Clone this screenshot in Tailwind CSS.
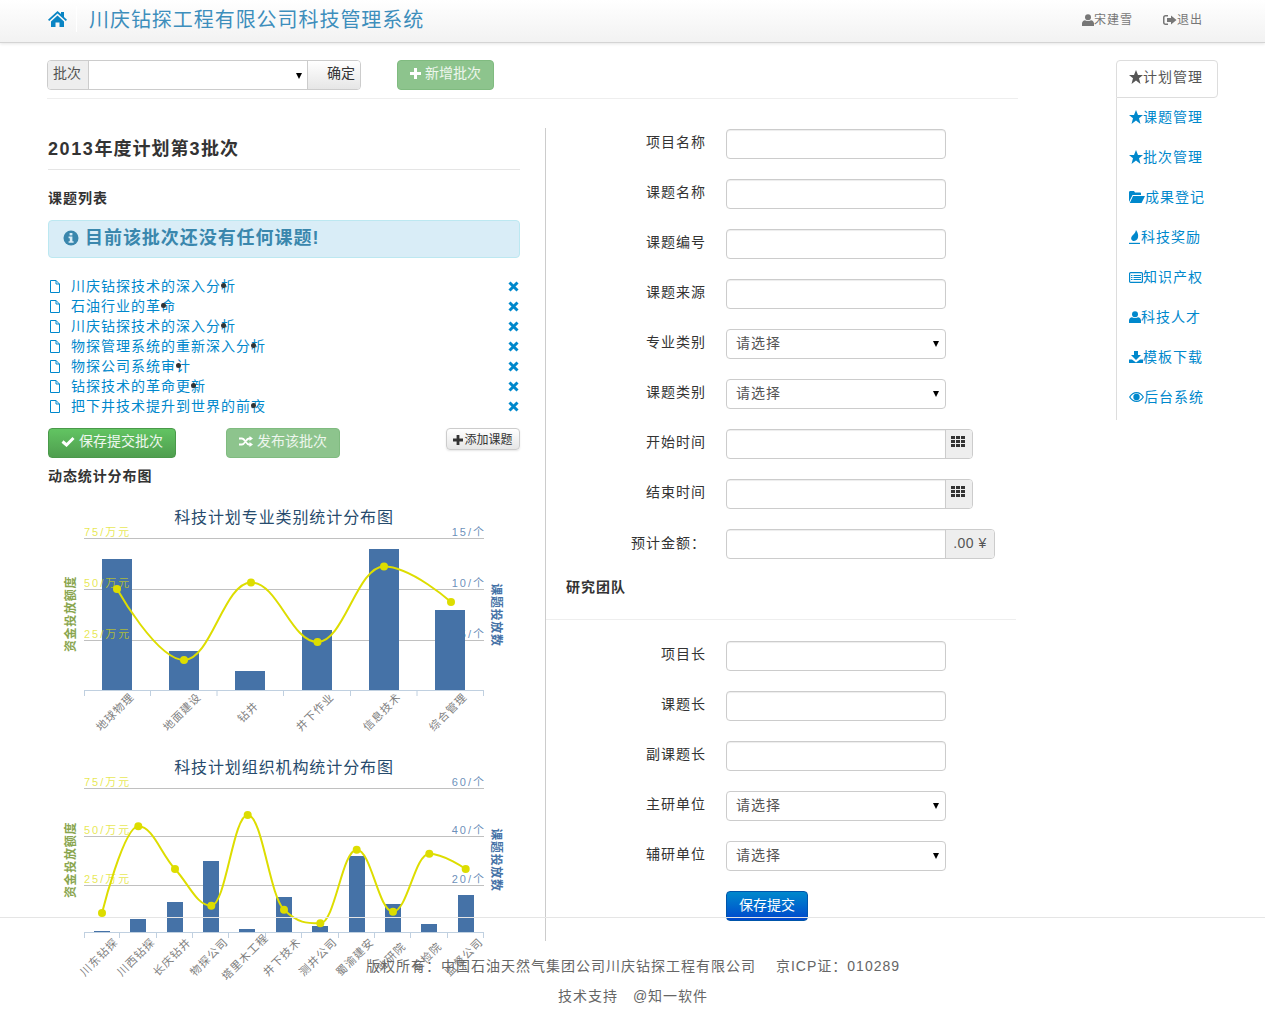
<!DOCTYPE html>
<html lang="zh"><head><meta charset="utf-8"><title>川庆钻探工程有限公司科技管理系统</title>
<script src="https://cdn.jsdelivr.net/npm/@tailwindcss/browser@4"></script></head>
<body class="bg-white text-[14px] leading-[20px] tracking-[1px] text-[#333] font-['Liberation_Sans','Noto_Sans_CJK_SC',sans-serif]">
<header class="h-[43px] bg-gradient-to-b from-white to-[#f2f2f2] border-b border-[#d4d4d4] shadow-[0_1px_3px_rgba(0,0,0,0.1)] flex items-center pl-[48px]">
<svg class="w-[19px] h-[16px] mb-[4px] fill-[#0a85c4]" viewBox="0 0 19 16"><path d="M9.5 0 L13 3V1h3v5l3 2.8-1.2 1.2L9.5 2.6 1.2 10 0 8.8ZM3 10.400 9.5 4.600 16 10.400V16h-4.500v-4.500h-4V16H3Z"/></svg>
<div class="w-px h-[26px] bg-white ml-[9px] mb-[4px]"></div>
<div class="ml-[12px] text-[20px] tracking-[0.95px] text-[#3d8ebc] mb-[2px]">川庆钻探工程有限公司科技管理系统</div>
<div class="ml-auto flex items-center text-[12px] text-[#777] mr-[62px] mb-[2px]">
<svg class="w-[12px] h-[12px] fill-[#777]" viewBox="0 0 12 12"><circle cx="6" cy="3.200" r="3"/><path d="M0 12V9.500C0 7.500 1.500 6.500 3 6.300 4 7.200 8 7.200 9 6.300 10.500 6.500 12 7.500 12 9.500V12Z"/></svg><span>宋建雪</span>
<svg class="w-[14px] h-[12px] ml-[30px] fill-[#777]" viewBox="0 0 14 12"><path d="M5 1H2.500C1 1 0 2 0 3.500v5C0 10 1 11 2.500 11H5V9.500H2.500C2 9.500 1.500 9 1.500 8.500v-5C1.500 3 2 2.500 2.500 2.500H5ZM8 1.500 13.500 6 8 10.500V8H4V4H8Z"/></svg><span>退出</span>
</div>
</header>

<main class="h-[874px] flex">
<div class="w-[971px] ml-[47px] shrink-0">
  <div class="h-[56px] pt-[17px] border-b border-[#eee] flex items-start">
    <div class="flex h-[30px] w-[314px] border border-[#ccc] rounded-[4px] overflow-hidden tracking-[0]">
      <span class="w-[41px] bg-[#eee] border-r border-[#ccc] pl-[5px] pt-[2px] text-[#555]">批次</span>
      <div class="relative flex-1 min-w-0"><select class="appearance-none w-full h-full bg-white outline-none"><option></option></select><svg class="absolute right-[5px] top-[12px] w-[6px] h-[6px] fill-black" viewBox="0 0 6 6"><path d="M0 0h6L3 6Z"/></svg></div>
      <span class="w-[53px] border-l border-[#ccc] bg-gradient-to-b from-white to-[#e6e6e6] text-right pr-[5px] pt-[2px]">确定</span>
    </div>
    <span class="ml-[36px] w-[97px] h-[30px] pb-[4px] rounded-[4px] bg-[#8dc48d] border border-[#80bb80] text-white/85 tracking-[0] flex items-center justify-center">
      <svg class="w-[11px] h-[11px] fill-white mr-[4px]" viewBox="0 0 11 11"><path d="M4 0h3v4h4v3H7v4H4V7H0V4h4Z"/></svg>新增批次</span>
  </div>
  <div class="flex h-[842px]">
    <section class="w-[472px] ml-[1px] pt-[29px] shrink-0">
      <h2 class="text-[18px] leading-[42px] font-bold tracking-[1px] h-[42px] border-b border-[#e5e5e5]"><span class="tracking-[1.6px]">2013</span>年度计划第<span class="tracking-[1.6px]">3</span>批次</h2>
      <h3 class="mt-[18px] font-bold tracking-[1px]">课题列表</h3>
      <div class="mt-[12px] h-[38px] pb-[2px] bg-[#d9edf7] border border-[#bce8f1] rounded-[4px] flex items-center pl-[14px] text-[18px] font-bold text-[#3a87ad] tracking-[0.95px]">
        <svg class="w-[16px] h-[16px] mr-[6px]" viewBox="0 0 16 16"><circle cx="8" cy="8" r="7.500" fill="#3a87ad"/><rect x="6.600" y="3" width="2.800" height="2.400" fill="#d9edf7"/><path d="M5.600 6.600h3.800V11.200H10.600V12.800H5.600V11.200H6.800V8.200H5.600Z" fill="#d9edf7"/></svg>目前该批次还没有任何课题!
      </div>
      <ul class="mt-[18px] text-[#0088cc]">
        <li class="h-[20px] flex items-center"><svg class="w-[10px] h-[13px] ml-[2px] mr-[11px] fill-none stroke-[#0088cc]" viewBox="0 0 10 13"><path d="M.5.5H6L9.500 4V12.500H.5ZM6 .5V4H9.500"/></svg><span class="relative">川庆钻探技术的深入分析<i class="absolute w-[5px] h-[5px] rounded-full bg-[#333] right-[10px] top-[7px]"></i></span><svg class="ml-auto w-[11px] h-[11px] mr-[1px] stroke-[#0088cc] stroke-[3px]" viewBox="0 0 11 11"><path d="M1.500 1.500l8 8M9.500 1.500l-8 8"/></svg></li>
        <li class="h-[20px] flex items-center"><svg class="w-[10px] h-[13px] ml-[2px] mr-[11px] fill-none stroke-[#0088cc]" viewBox="0 0 10 13"><path d="M.5.5H6L9.500 4V12.500H.5ZM6 .5V4H9.500"/></svg><span class="relative">石油行业的革命<i class="absolute w-[5px] h-[5px] rounded-full bg-[#333] right-[10px] top-[7px]"></i></span><svg class="ml-auto w-[11px] h-[11px] mr-[1px] stroke-[#0088cc] stroke-[3px]" viewBox="0 0 11 11"><path d="M1.500 1.500l8 8M9.500 1.500l-8 8"/></svg></li>
        <li class="h-[20px] flex items-center"><svg class="w-[10px] h-[13px] ml-[2px] mr-[11px] fill-none stroke-[#0088cc]" viewBox="0 0 10 13"><path d="M.5.5H6L9.500 4V12.500H.5ZM6 .5V4H9.500"/></svg><span class="relative">川庆钻探技术的深入分析<i class="absolute w-[5px] h-[5px] rounded-full bg-[#333] right-[10px] top-[7px]"></i></span><svg class="ml-auto w-[11px] h-[11px] mr-[1px] stroke-[#0088cc] stroke-[3px]" viewBox="0 0 11 11"><path d="M1.500 1.500l8 8M9.500 1.500l-8 8"/></svg></li>
        <li class="h-[20px] flex items-center"><svg class="w-[10px] h-[13px] ml-[2px] mr-[11px] fill-none stroke-[#0088cc]" viewBox="0 0 10 13"><path d="M.5.5H6L9.500 4V12.500H.5ZM6 .5V4H9.500"/></svg><span class="relative">物探管理系统的重新深入分析<i class="absolute w-[5px] h-[5px] rounded-full bg-[#333] right-[10px] top-[7px]"></i></span><svg class="ml-auto w-[11px] h-[11px] mr-[1px] stroke-[#0088cc] stroke-[3px]" viewBox="0 0 11 11"><path d="M1.500 1.500l8 8M9.500 1.500l-8 8"/></svg></li>
        <li class="h-[20px] flex items-center"><svg class="w-[10px] h-[13px] ml-[2px] mr-[11px] fill-none stroke-[#0088cc]" viewBox="0 0 10 13"><path d="M.5.5H6L9.500 4V12.500H.5ZM6 .5V4H9.500"/></svg><span class="relative">物探公司系统审计<i class="absolute w-[5px] h-[5px] rounded-full bg-[#333] right-[10px] top-[7px]"></i></span><svg class="ml-auto w-[11px] h-[11px] mr-[1px] stroke-[#0088cc] stroke-[3px]" viewBox="0 0 11 11"><path d="M1.500 1.500l8 8M9.500 1.500l-8 8"/></svg></li>
        <li class="h-[20px] flex items-center"><svg class="w-[10px] h-[13px] ml-[2px] mr-[11px] fill-none stroke-[#0088cc]" viewBox="0 0 10 13"><path d="M.5.5H6L9.500 4V12.500H.5ZM6 .5V4H9.500"/></svg><span class="relative">钻探技术的革命更新<i class="absolute w-[5px] h-[5px] rounded-full bg-[#333] right-[10px] top-[7px]"></i></span><svg class="ml-auto w-[11px] h-[11px] mr-[1px] stroke-[#0088cc] stroke-[3px]" viewBox="0 0 11 11"><path d="M1.500 1.500l8 8M9.500 1.500l-8 8"/></svg></li>
        <li class="h-[20px] flex items-center"><svg class="w-[10px] h-[13px] ml-[2px] mr-[11px] fill-none stroke-[#0088cc]" viewBox="0 0 10 13"><path d="M.5.5H6L9.500 4V12.500H.5ZM6 .5V4H9.500"/></svg><span class="relative">把下井技术提升到世界的前夜<i class="absolute w-[5px] h-[5px] rounded-full bg-[#333] right-[10px] top-[7px]"></i></span><svg class="ml-auto w-[11px] h-[11px] mr-[1px] stroke-[#0088cc] stroke-[3px]" viewBox="0 0 11 11"><path d="M1.500 1.500l8 8M9.500 1.500l-8 8"/></svg></li>
      </ul>
      <div class="mt-[12px] flex items-start tracking-[0]">
        <span class="w-[128px] h-[30px] pb-[4px] rounded-[4px] bg-gradient-to-b from-[#62c462] to-[#4f9e4f] border border-[#4a994a] text-white/90 flex items-center justify-center">
          <svg class="w-[14px] h-[11px] mr-[4px]" viewBox="0 0 14 11"><path d="M1.500 5.500 5.500 9 12.500 2" fill="none" stroke="#fff" stroke-width="3"/></svg>保存提交批次</span>
        <span class="ml-[50px] w-[114px] h-[30px] pb-[4px] rounded-[4px] bg-[#8dc48d] border border-[#80bb80] text-white/85 flex items-center justify-center">
          <svg class="w-[14px] h-[11px] mr-[4px]" viewBox="0 0 14 11"><path d="M0 2.500H3C6 2.500 7 8.500 10 8.500H11M0 8.500H3C6 8.500 7 2.500 10 2.500H11" fill="none" stroke="#fff" stroke-width="1.800"/><path d="M10.500 0 14 2.500 10.500 5ZM10.500 6 14 8.500 10.500 11Z" fill="#fff"/></svg>发布该批次</span>
        <span class="ml-auto w-[74px] h-[22px] pt-[1px] rounded-[4px] bg-gradient-to-b from-white to-[#e6e6e6] border border-[#ccc] shadow-[0_1px_2px_rgba(0,0,0,0.1)] text-[12px] leading-[20px] flex items-center justify-center">
          <svg class="w-[10px] h-[10px] fill-[#333] mr-[1px]" viewBox="0 0 10 10"><path d="M3.600 0h2.800v3.600H10v2.800H6.400V10H3.600V6.400H0V3.600h3.600Z"/></svg>添加课题</span>
      </div>
      <h3 class="mt-[8px] font-bold tracking-[0.9px]">动态统计分布图</h3>
      <svg class="block -ml-[48px] mt-[12px] w-[520px] h-[460px] overflow-visible tracking-[2px]" viewBox="0 498 520 460" font-size="11">
        <!-- chart 1 -->
        <g stroke="#c0c0c0" stroke-width="1"><path d="M84 538.500H484M84 589.500H484M84 640.500H484"/></g>
        <g fill="#4572a7" fill-opacity="0.8" text-anchor="end"><text x="486" y="536">15/个</text><text x="486" y="587">10/个</text><text x="486" y="638">5/个</text></g>
        <g fill="#4572a7"><rect x="102" y="559" width="30" height="131"/><rect x="169" y="651" width="30" height="39"/><rect x="235" y="671" width="30" height="19"/><rect x="302" y="630" width="30" height="60"/><rect x="369" y="549" width="30" height="141"/><rect x="435" y="610" width="30" height="80"/></g>
        <path d="M84 690.500H484M84.500 690V696M150.500 690V696M217 690V696M283.500 690V696M350.500 690V696M417 690V696M483.500 690V696" stroke="#c0d0e0" fill="none"/>
        <g fill="#dddd00" fill-opacity="0.7"><text x="84" y="536">75/万元</text><text x="84" y="587">50/万元</text><text x="84" y="638">25/万元</text></g>
        <text x="284" y="523" text-anchor="middle" font-size="16" fill="#274b6d" class="tracking-[0.9px]">科技计划专业类别统计分布图</text>
        <text transform="rotate(-90 75 614)" x="75" y="614" text-anchor="middle" font-size="12" font-weight="bold" fill="#89a54e" class="tracking-[0.7px]">资金投放额度</text>
        <text transform="rotate(90 492 615)" x="492" y="615" text-anchor="middle" font-size="12" font-weight="bold" fill="#4572a7" class="tracking-[0.7px]">课题投放数</text>
        <g fill="#808080" text-anchor="middle" class="tracking-[1px]">
          <text transform="rotate(-45 115 712)" x="115" y="716">地球物理</text><text transform="rotate(-45 182 712)" x="182" y="716">地面建设</text><text transform="rotate(-45 248 712)" x="248" y="716">钻井</text><text transform="rotate(-45 315 712)" x="315" y="716">井下作业</text><text transform="rotate(-45 382 712)" x="382" y="716">信息技术</text><text transform="rotate(-45 448 712)" x="448" y="716">综合管理</text>
        </g>
        <path d="M117 589C117 589 157 660 184 660C211 660 224 582.500 251 582.500C278 582.500 291 642 317.500 642C344 642 357 566.500 384 566.500C411 566.500 451 602 451 602" fill="none" stroke="#dddd00" stroke-width="2"/>
        <g fill="#dddd00"><circle cx="117" cy="589" r="4"/><circle cx="184" cy="660" r="4"/><circle cx="251" cy="582.500" r="4"/><circle cx="317.500" cy="642" r="4"/><circle cx="384" cy="566.500" r="4"/><circle cx="451" cy="602" r="4"/></g>
        <!-- chart 2 -->
        <path d="M84 788.500H484M84 836.500H484M84 885.500H484" stroke="#c0c0c0"/>
        <g fill="#4572a7" fill-opacity="0.8" text-anchor="end"><text x="486" y="786">60/个</text><text x="486" y="834">40/个</text><text x="486" y="883">20/个</text></g>
        <g fill="#4572a7"><rect x="94" y="931" width="16" height="2"/><rect x="130" y="919" width="16" height="14"/><rect x="167" y="902" width="16" height="31"/><rect x="203" y="861" width="16" height="72"/><rect x="239" y="929" width="16" height="4"/><rect x="276" y="897" width="16" height="36"/><rect x="312" y="926" width="16" height="7"/><rect x="349" y="856" width="16" height="77"/><rect x="385" y="904" width="16" height="29"/><rect x="421" y="924" width="16" height="9"/><rect x="458" y="895" width="16" height="38"/></g>
        <path d="M84 932.500H484M84.500 932V938M119.500 932V938M156.500 932V938M192.500 932V938M228.500 932V938M265.500 932V938M301.500 932V938M338.500 932V938M374.500 932V938M410.500 932V938M447.500 932V938M483.500 932V938" stroke="#c0d0e0" fill="none"/>
        <g fill="#dddd00" fill-opacity="0.7"><text x="84" y="786">75/万元</text><text x="84" y="834">50/万元</text><text x="84" y="883">25/万元</text></g>
        <text x="284" y="773" text-anchor="middle" font-size="16" fill="#274b6d" class="tracking-[0.9px]">科技计划组织机构统计分布图</text>
        <text transform="rotate(-90 75 860)" x="75" y="860" text-anchor="middle" font-size="12" font-weight="bold" fill="#89a54e" class="tracking-[0.7px]">资金投放额度</text>
        <text transform="rotate(90 492 860)" x="492" y="860" text-anchor="middle" font-size="12" font-weight="bold" fill="#4572a7" class="tracking-[0.7px]">课题投放数</text>
        <g fill="#808080" text-anchor="middle" class="tracking-[1px]">
          <text transform="rotate(-45 99 957)" x="99" y="961">川东钻探</text><text transform="rotate(-45 136 957)" x="136" y="961">川西钻探</text><text transform="rotate(-45 172 957)" x="172" y="961">长庆钻井</text><text transform="rotate(-45 209 957)" x="209" y="961">物探公司</text><text transform="rotate(-45 245 957)" x="245" y="961">塔里木工程</text><text transform="rotate(-45 282 957)" x="282" y="961">井下技术</text><text transform="rotate(-45 318 957)" x="318" y="961">测井公司</text><text transform="rotate(-45 355 957)" x="355" y="961">蜀渝建安</text><text transform="rotate(-45 391 957)" x="391" y="961">地研院</text><text transform="rotate(-45 427 957)" x="427" y="961">安检院</text><text transform="rotate(-45 464 957)" x="464" y="961">监督公司</text>
        </g>
        <path d="M102 913C102 913 123.800 826.300 138.300 826.300C152.800 826.300 160.500 853.100 175 869C189.500 884.900 196.800 905.700 211.300 905.700C225.800 905.700 233.200 815 247.700 815C262.200 815 269.500 896.100 284 909.700C298.500 923.300 305.800 923.300 320.300 923.300C334.800 923.300 342.200 849.700 356.700 849.700C371.200 849.700 378.500 911.700 393 911.700C407.500 911.700 414.800 853.700 429.300 853.700C443.800 853.700 465.700 869 465.700 869" fill="none" stroke="#dddd00" stroke-width="2"/>
        <g fill="#dddd00"><circle cx="102" cy="913" r="4"/><circle cx="138.300" cy="826.300" r="4"/><circle cx="175" cy="869" r="4"/><circle cx="211.300" cy="905.700" r="4"/><circle cx="247.700" cy="815" r="4"/><circle cx="284" cy="909.700" r="4"/><circle cx="320.300" cy="923.300" r="4"/><circle cx="356.700" cy="849.700" r="4"/><circle cx="393" cy="911.700" r="4"/><circle cx="429.300" cy="853.700" r="4"/><circle cx="465.700" cy="869" r="4"/></g>
      </svg>
    </section>
    <section class="flex-1 border-l border-[#ccc] h-[813px] mt-[29px] ml-[25px]">
      <div class="flex flex-col">
        <label class="flex h-[50px] pt-[1px]"><span class="w-[160px] text-right pt-[3px]">项目名称</span><input class="ml-[20px] w-[220px] h-[30px] border border-[#ccc] rounded-[4px] shadow-[inset_0_1px_1px_rgba(0,0,0,0.075)]"></label>
        <label class="flex h-[50px] pt-[1px]"><span class="w-[160px] text-right pt-[3px]">课题名称</span><input class="ml-[20px] w-[220px] h-[30px] border border-[#ccc] rounded-[4px] shadow-[inset_0_1px_1px_rgba(0,0,0,0.075)]"></label>
        <label class="flex h-[50px] pt-[1px]"><span class="w-[160px] text-right pt-[3px]">课题编号</span><input class="ml-[20px] w-[220px] h-[30px] border border-[#ccc] rounded-[4px] shadow-[inset_0_1px_1px_rgba(0,0,0,0.075)]"></label>
        <label class="flex h-[50px] pt-[1px]"><span class="w-[160px] text-right pt-[3px]">课题来源</span><input class="ml-[20px] w-[220px] h-[30px] border border-[#ccc] rounded-[4px] shadow-[inset_0_1px_1px_rgba(0,0,0,0.075)]"></label>
        <label class="flex h-[50px] pt-[1px]"><span class="w-[160px] text-right pt-[3px]">专业类别</span><div class="relative ml-[20px] w-[220px] h-[30px]"><select class="appearance-none w-full h-full border border-[#ccc] rounded-[4px] bg-white pl-[9px] pb-[3px] text-[#555]"><option>请选择</option></select><svg class="absolute right-[7px] top-[12px] w-[6px] h-[6px] fill-black" viewBox="0 0 6 6"><path d="M0 0h6L3 6Z"/></svg></div></label>
        <label class="flex h-[50px] pt-[1px]"><span class="w-[160px] text-right pt-[3px]">课题类别</span><div class="relative ml-[20px] w-[220px] h-[30px]"><select class="appearance-none w-full h-full border border-[#ccc] rounded-[4px] bg-white pl-[9px] pb-[3px] text-[#555]"><option>请选择</option></select><svg class="absolute right-[7px] top-[12px] w-[6px] h-[6px] fill-black" viewBox="0 0 6 6"><path d="M0 0h6L3 6Z"/></svg></div></label>
        <label class="flex h-[50px] pt-[1px]"><span class="w-[160px] text-right pt-[3px]">开始时间</span><div class="ml-[20px] w-[247px] h-[30px] border border-[#ccc] rounded-[4px] flex overflow-hidden"><input class="flex-1 min-w-0 shadow-[inset_0_1px_1px_rgba(0,0,0,0.075)]"><span class="w-[27px] pr-[2px] bg-[#eee] border-l border-[#ccc] flex justify-center pt-[6px]"><svg class="w-[14px] h-[11px] fill-[#333]" viewBox="0 0 14 11"><path d="M0 0h4v3H0ZM5 0h4v3H5ZM10 0h4v3h-4ZM0 4h4v3H0ZM5 4h4v3H5ZM10 4h4v3h-4ZM0 8h4v3H0ZM5 8h4v3H5ZM10 8h4v3h-4Z"/></svg></span></div></label>
        <label class="flex h-[50px] pt-[1px]"><span class="w-[160px] text-right pt-[3px]">结束时间</span><div class="ml-[20px] w-[247px] h-[30px] border border-[#ccc] rounded-[4px] flex overflow-hidden"><input class="flex-1 min-w-0 shadow-[inset_0_1px_1px_rgba(0,0,0,0.075)]"><span class="w-[27px] pr-[2px] bg-[#eee] border-l border-[#ccc] flex justify-center pt-[6px]"><svg class="w-[14px] h-[11px] fill-[#333]" viewBox="0 0 14 11"><path d="M0 0h4v3H0ZM5 0h4v3H5ZM10 0h4v3h-4ZM0 4h4v3H0ZM5 4h4v3H5ZM10 4h4v3h-4ZM0 8h4v3H0ZM5 8h4v3H5ZM10 8h4v3h-4Z"/></svg></span></div></label>
        <label class="flex h-[50px] pt-[1px]"><span class="w-[160px] text-right pt-[3px]">预计金额<span class="font-['Noto_Sans_CJK_TC',sans-serif]">：</span></span><div class="ml-[20px] w-[269px] h-[30px] border border-[#ccc] rounded-[4px] flex overflow-hidden"><input class="flex-1 min-w-0 shadow-[inset_0_1px_1px_rgba(0,0,0,0.075)]"><span class="w-[49px] bg-[#eee] border-l border-[#ccc] text-[#555] text-center pt-[3px] tracking-[0.5px]">.00 ¥</span></div></label>
      </div>
      <h3 class="pl-[20px] font-bold tracking-[1px] mt-[-1px] h-[33px]">研究团队</h3>
      <div class="border-b border-[#eee] h-[10px] mb-[21px] mr-[2px]"></div>
      <div class="flex flex-col">
        <label class="flex h-[50px]"><span class="w-[160px] text-right pt-[3px]">项目长</span><input class="ml-[20px] w-[220px] h-[30px] border border-[#ccc] rounded-[4px] shadow-[inset_0_1px_1px_rgba(0,0,0,0.075)]"></label>
        <label class="flex h-[50px]"><span class="w-[160px] text-right pt-[3px]">课题长</span><input class="ml-[20px] w-[220px] h-[30px] border border-[#ccc] rounded-[4px] shadow-[inset_0_1px_1px_rgba(0,0,0,0.075)]"></label>
        <label class="flex h-[50px]"><span class="w-[160px] text-right pt-[3px]">副课题长</span><input class="ml-[20px] w-[220px] h-[30px] border border-[#ccc] rounded-[4px] shadow-[inset_0_1px_1px_rgba(0,0,0,0.075)]"></label>
        <label class="flex h-[50px]"><span class="w-[160px] text-right pt-[3px]">主研单位</span><div class="relative ml-[20px] w-[220px] h-[30px]"><select class="appearance-none w-full h-full border border-[#ccc] rounded-[4px] bg-white pl-[9px] pb-[3px] text-[#555]"><option>请选择</option></select><svg class="absolute right-[7px] top-[12px] w-[6px] h-[6px] fill-black" viewBox="0 0 6 6"><path d="M0 0h6L3 6Z"/></svg></div></label>
        <label class="flex h-[50px]"><span class="w-[160px] text-right pt-[3px]">辅研单位</span><div class="relative ml-[20px] w-[220px] h-[30px]"><select class="appearance-none w-full h-full border border-[#ccc] rounded-[4px] bg-white pl-[9px] pb-[3px] text-[#555]"><option>请选择</option></select><svg class="absolute right-[7px] top-[12px] w-[6px] h-[6px] fill-black" viewBox="0 0 6 6"><path d="M0 0h6L3 6Z"/></svg></div></label>
      </div>
      <span class="ml-[180px] block w-[82px] h-[30px] rounded-[4px] bg-gradient-to-b from-[#0088cc] to-[#0044cc] border border-[#0055aa] text-white tracking-[0] text-center leading-[26px]">保存提交</span>
    </section>
  </div>
</div>
<nav class="ml-[98px] mt-[17px] w-[102px] text-[#0088cc]">
  <div class="h-[38px] pb-[4px] border border-[#ddd] rounded-r-[4px] rounded-tl-[4px] bg-white flex items-center pl-[12px] text-[#555]"><svg class="w-[14px] h-[14px] fill-[#555]" viewBox="0 0 14 14"><path d="M7 0 9 5h5l-4 3.200L11.500 14 7 10.600 2.500 14 4 8.200 0 5h5Z"/></svg><span>计划管理</span></div>
  <div class="border-l border-[#ddd] h-[322px]">
    <div class="h-[40px] pb-[2px] flex items-center pl-[12px]"><svg class="w-[14px] h-[14px] fill-[#0088cc]" viewBox="0 0 14 14"><path d="M7 0 9 5h5l-4 3.200L11.500 14 7 10.600 2.500 14 4 8.200 0 5h5Z"/></svg><span>课题管理</span></div>
    <div class="h-[40px] pb-[2px] flex items-center pl-[12px]"><svg class="w-[14px] h-[14px] fill-[#0088cc]" viewBox="0 0 14 14"><path d="M7 0 9 5h5l-4 3.200L11.500 14 7 10.600 2.500 14 4 8.200 0 5h5Z"/></svg><span>批次管理</span></div>
    <div class="h-[40px] pb-[2px] flex items-center pl-[12px]"><svg class="w-[16px] h-[12px] fill-[#0088cc]" viewBox="0 0 16 12"><path d="M0 11V1.500C0 .5.500 0 1.500 0H5l1 1.500h5c.6 0 1 .4 1 1V4H3.500L0 11ZM4 5H16L12.500 12H.8Z"/></svg><span>成果登记</span></div>
    <div class="h-[40px] pb-[2px] flex items-center pl-[12px]"><svg class="w-[12px] h-[14px] fill-[#0088cc]" viewBox="0 0 12 14"><path d="M7 0C9 3 9.500 5 9 7.500 8.500 10 6 11.500 4 11 2 10 1.500 8 3 6 4.500 4.500 6.500 3 7 0Z"/><rect x="0" y="12.800" width="11" height="1.200"/></svg><span>科技奖励</span></div>
    <div class="h-[40px] pb-[2px] flex items-center pl-[12px]"><svg class="w-[14px] h-[11px]" viewBox="0 0 14 11"><rect x=".6" y=".6" width="12.800" height="9.800" rx="1" fill="none" stroke="#0088cc" stroke-width="1.200"/><path d="M2 3h1.500v1H2ZM4.500 3H12v1H4.500ZM2 5h1.500v1H2ZM4.500 5H12v1H4.500ZM2 7h1.500v1H2ZM4.500 7H12v1H4.500Z" fill="#0088cc"/></svg><span>知识产权</span></div>
    <div class="h-[40px] pb-[2px] flex items-center pl-[12px]"><svg class="w-[12px] h-[12px] fill-[#0088cc]" viewBox="0 0 12 12"><circle cx="6" cy="3.200" r="3"/><path d="M0 12V9.500C0 7.500 1.500 6.500 3 6.300 4 7.200 8 7.200 9 6.300 10.500 6.500 12 7.500 12 9.500V12Z"/></svg><span>科技人才</span></div>
    <div class="h-[40px] pb-[2px] flex items-center pl-[12px]"><svg class="w-[14px] h-[12px] fill-[#0088cc]" viewBox="0 0 14 12"><path d="M5 0h4v4h3L7 9 2 4h3ZM0 8.500h3L7 11.500 11 8.500h3V12H0Z"/></svg><span>模板下载</span></div>
    <div class="h-[40px] pb-[2px] flex items-center pl-[12px]"><svg class="w-[15px] h-[10px]" viewBox="0 0 15 10"><path d="M.7 5C2.500 2 5 .6 7.500.6S12.500 2 14.300 5C12.500 8 10 9.400 7.500 9.400S2.500 8 .7 5Z" fill="none" stroke="#0088cc" stroke-width="1.200"/><circle cx="7.500" cy="5" r="3.200" fill="#0088cc"/></svg><span>后台系统</span></div>
  </div>
</nav>
</main>
<footer class="relative h-[101px] border-t border-[#e5e5e5] text-center text-[#666] pt-[37px]">
  <p class="pl-[1px]">版权所有<span class="font-['Noto_Sans_CJK_TC',sans-serif]">：</span>中国石油天然气集团公司川庆钻探工程有限公司<span class="ml-[20px]">京ICP证<span class="font-['Noto_Sans_CJK_TC',sans-serif]">：</span>010289</span></p>
  <p class="mt-[10px] pl-[1px]">技术支持<span class="ml-[15px]">@知一软件</span></p>
</footer>
</body></html>
